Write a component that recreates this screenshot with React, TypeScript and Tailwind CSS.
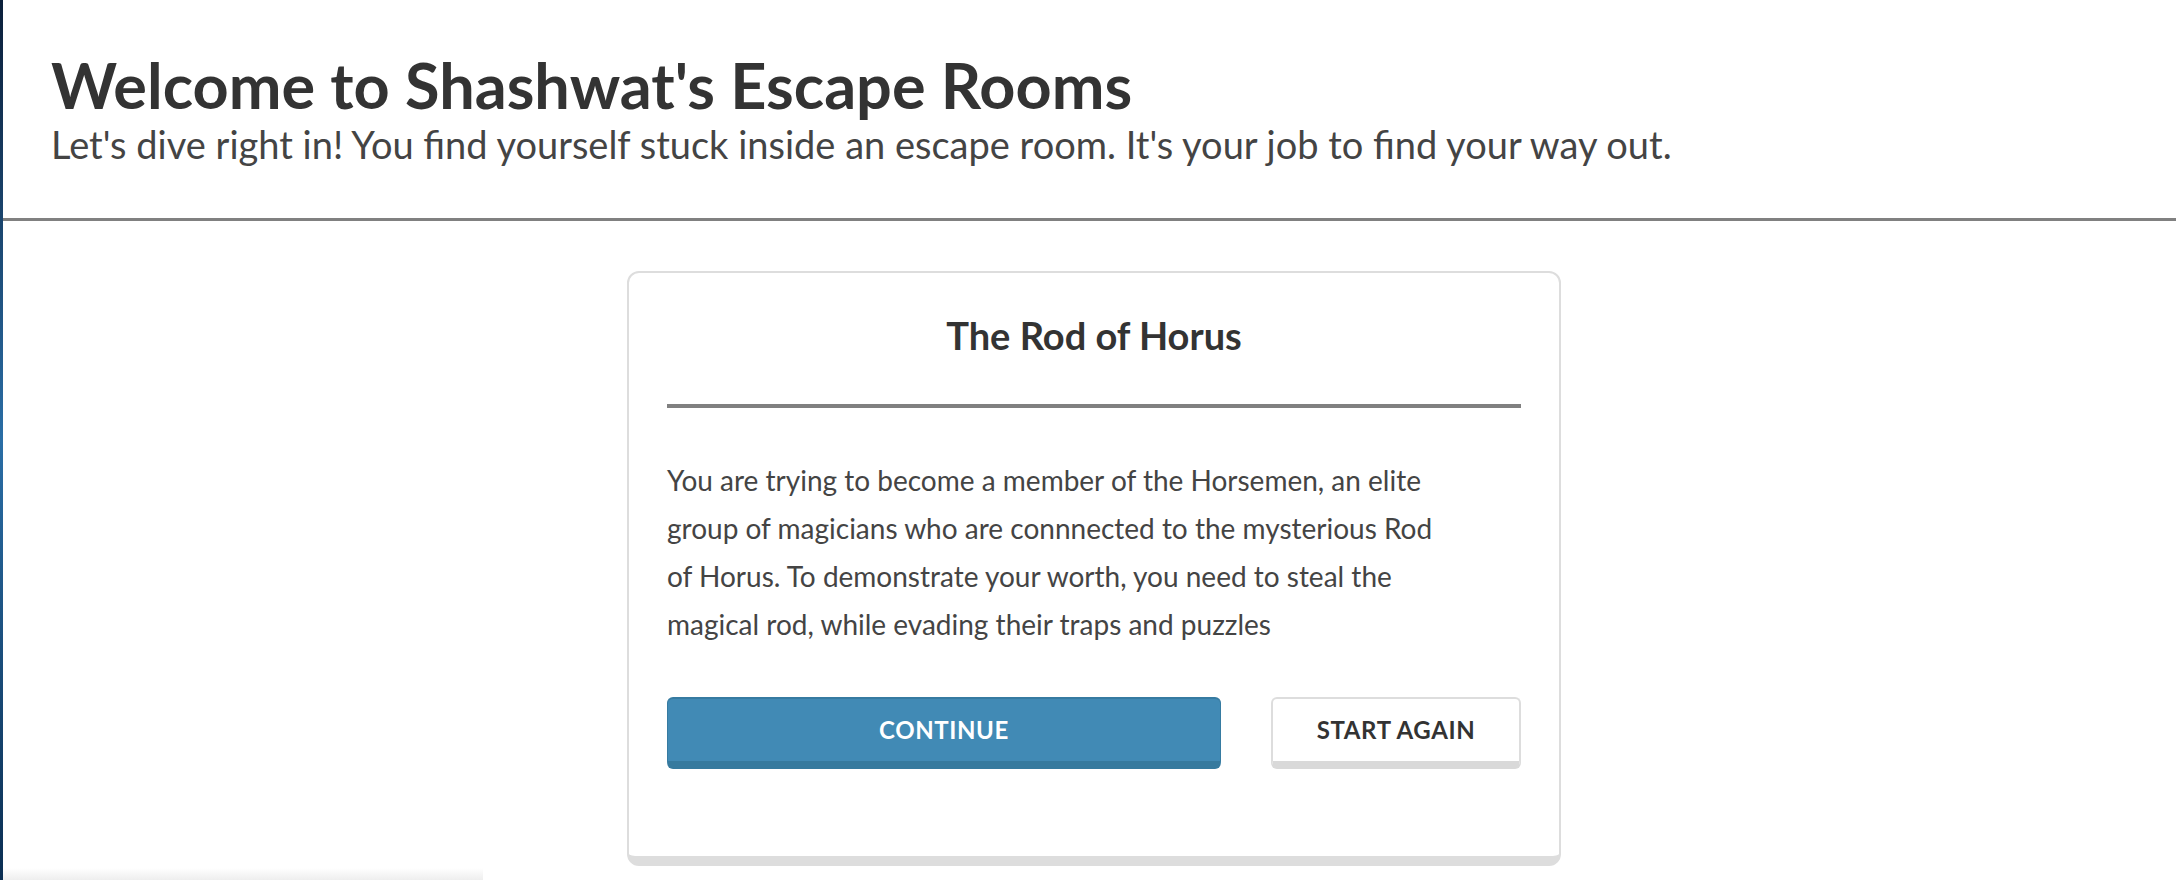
// Landing screen for the escape-room game: page header plus the current room card.

const FONT = "font-['Lato','Noto_Sans',sans-serif]"

interface Room {
  title: string
  blurb: string
}

const ROOM: Room = {
  title: 'The Rod of Horus',
  blurb:
    'You are trying to become a member of the Horsemen, an elite group of magicians who are connnected to the mysterious Rod of Horus. To demonstrate your worth, you need to steal the magical rod, while evading their traps and puzzles',
}

function RoomCard({ room }: { room: Room }) {
  return (
    <div className="w-[934px] rounded-xl border-2 border-b-[10px] border-[#dddddd] bg-white px-[38px] pt-[40px] pb-[87px]">
      <h2 className="text-center text-[38px] leading-[44px] font-bold text-[#333333]">{room.title}</h2>
      <hr className="mt-[47px] border-t-[4px] border-[#808080]" />
      {/* width keeps the reference's line breaks with this font */}
      <p className="mt-[48px] max-w-[787px] text-[28px] leading-[48px] text-[#444444]">{room.blurb}</p>
      <div className="mt-[49px] flex items-stretch gap-[50px]">
        <button
          type="button"
          className="h-[72px] flex-1 rounded-md border-t-2 border-b-[8px] border-x border-[#367ba1] border-b-[#367a9e] bg-[#418ab5] text-[24px] font-bold tracking-wide text-white uppercase"
        >
          Continue
        </button>
        <button
          type="button"
          className="h-[72px] w-[250px] rounded-md border-2 border-b-[8px] border-[#dddddd] border-b-[#d9d9d9] bg-white text-[24px] font-bold tracking-wide text-[#333333] uppercase"
        >
          Start again
        </button>
      </div>
    </div>
  )
}

export default function App() {
  return (
    <div className={`flex h-[880px] overflow-hidden bg-white ${FONT}`}>
      <div className="w-[3px] shrink-0 bg-gradient-to-b from-[#0b1f3a] via-[#2a6ea6] to-[#0b2e52]" />
      <main className="relative flex-1">
        <header className="h-[221px] border-b-[3px] border-[#808080] px-[48px] pt-[48px]">
          <h1 className="text-[63px] leading-[74px] font-bold text-[#333333]">Welcome to Shashwat's Escape Rooms</h1>
          <p className="text-[38px] leading-[44px] text-[#444444]">
            Let's dive right in! You find yourself stuck inside an escape room. It's your job to find your way out.
          </p>
        </header>
        <section className="flex justify-center pt-[50px] pl-[9px]">
          <RoomCard room={ROOM} />
        </section>
        <div className="pointer-events-none absolute bottom-0 left-0 h-[12px] w-[480px] bg-gradient-to-t from-[#eeeeee] to-transparent" />
      </main>
    </div>
  )
}
